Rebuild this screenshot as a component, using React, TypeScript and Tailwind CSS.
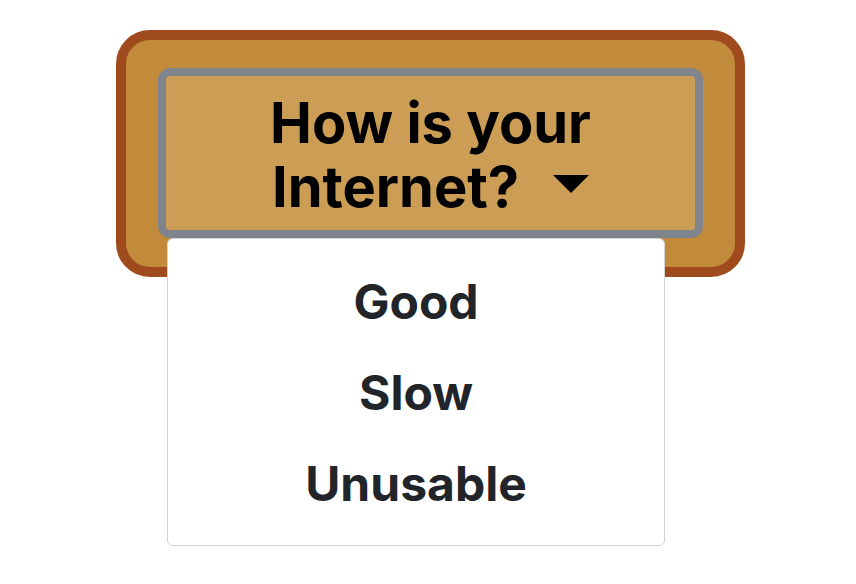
export default function App() {
  const items = ["Good", "Slow", "Unusable"];
  return (
    <div className="min-h-[584px] bg-white pt-[30px] pl-[116px]" style={{ fontFamily: 'Inter, "Liberation Sans", Arial, sans-serif' }}>
      <div className="w-[629px] rounded-[34px] border-[10px] border-[#a04b1d] bg-[#c28a3b] px-8 pt-7 pb-[29px]">
        <div className="relative">
          <button className="w-full rounded-[12px] border-[8px] border-[#80848c] bg-[#cc9d55] pt-[15px] pb-[11px] text-center text-[56px] font-bold leading-[64px] text-black">
            How is your Internet?
            <span className="ml-[34px] inline-block align-[0.255em] border-x-[18px] border-t-[18px] border-x-transparent border-t-black" />
          </button>
          <div className="absolute top-full left-[9px] z-10 w-[498px] rounded-[6px] border border-[#d4d4d4] bg-white pt-[17px] pb-[16px]">
            {items.map((t) => (
              <div key={t} className="h-[91px] text-center text-[48px] font-bold leading-[91px] text-[#212529]">
                {t}
              </div>
            ))}
          </div>
        </div>
      </div>
    </div>
  );
}
